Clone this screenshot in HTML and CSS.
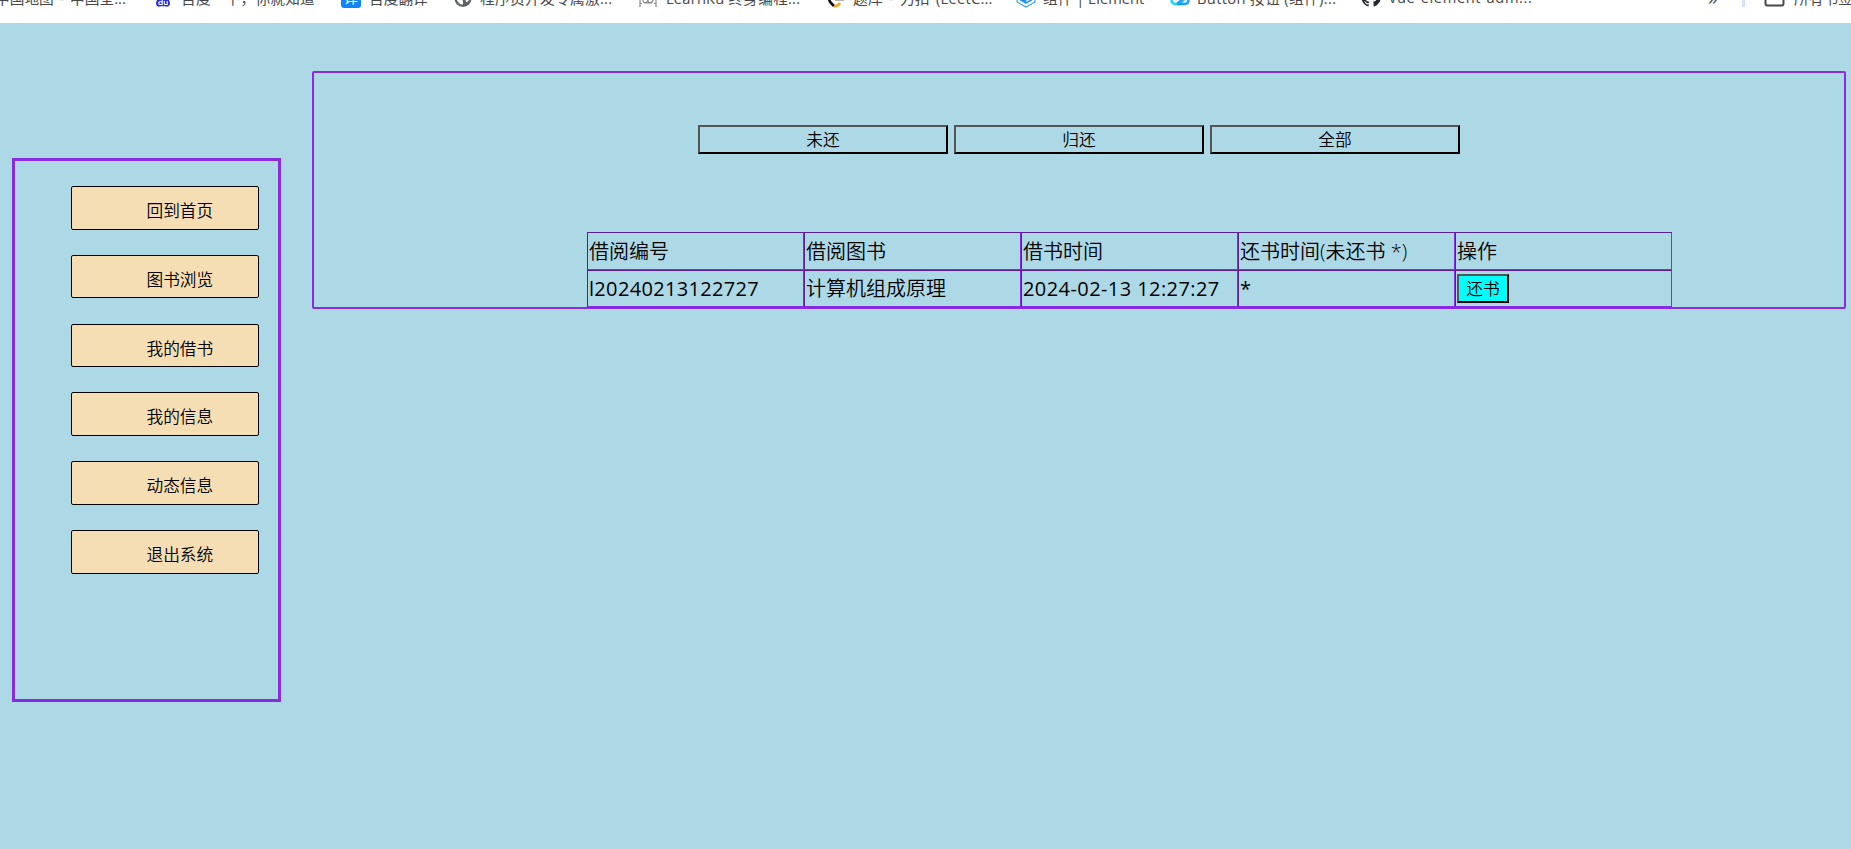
FILE: index.html
```html
<!DOCTYPE html>
<html lang="zh-CN">
<head>
<meta charset="utf-8">
<title>我的借书</title>
<link rel="stylesheet" href="styles.css">
</head>
<body>
<header class="bookmarks">
  <span class="bm bm-map">中国地图 - 中国全...</span>
  <span class="bm bm-baidu"><svg width="16" height="20" viewBox="0 0 16 20"><path d="M8 7C4 9 1 12 1 15.500C1 18 3 19 5 18.500C7 18 9 18 11 18.500C13 19 15 18 15 15.500C15 12 12 9 8 7Z" fill="#2932e1"/><path d="M7.200 12v4.500H5.500a1.400 1.400 0 1 1 0-2.700h1.700M9.300 13v2.500q0 1 1 1h1.900V13" fill="none" stroke="#fff" stroke-width="1.100"/></svg>百度一下，你就知道</span>
  <span class="bm bm-fanyi"><span class="yi">译</span>百度翻译</span>
  <span class="bm bm-dev"><svg width="18" height="20" viewBox="0 0 18 20"><circle cx="9" cy="10.500" r="8.500" fill="#5f6368"/><path d="M2.500 10h4l2.500 3v3.500c-4 0-6-3-6.500-6.500zM11 9h4.500c0 3-1 5-3.500 5z" fill="#fff"/></svg>程序员开发专属激...</span>
  <span class="bm bm-learn"><svg width="18" height="20" viewBox="0 0 18 20"><path d="M1 4v15M17 4v15M1 15.500h2M15 15.500h2M4 12q0 3 2.500 2.500T9 12q0 3 2.500 2.500T14 12M5 15h8" fill="none" stroke="#8a8a8a" stroke-width="1.200"/></svg>LearnKu 终身编程...</span>
  <span class="bm bm-leet"><svg width="18" height="20" viewBox="0 0 18 20"><path d="M2 10q0 3 2 5l3 3" fill="none" stroke="#111" stroke-width="2.600"/><path d="M7 18q3 1 6-3" fill="none" stroke="#ffa116" stroke-width="2.600"/><path d="M8 12h9" stroke="#b3b3b3" stroke-width="2"/></svg>题库 - 力扣 (LeetC...</span>
  <span class="bm bm-el"><svg width="20" height="20" viewBox="0 0 20 20"><path d="M1 5v9l9 5 9-5V5" fill="none" stroke="#409eff" stroke-width="1.200"/><path d="M4 6v6.500l6 3.500 6-3.500V6z" fill="#1890ff"/><path d="M10 13.500l5-3" stroke="#fff" stroke-width="1.200"/></svg>组件 | Element</span>
  <span class="bm bm-vant"><svg width="20" height="20" viewBox="0 0 20 20"><path d="M1.500 12q0 4 4 4h4l7-7" fill="none" stroke="#16d9ef" stroke-width="2.400"/><path d="M7 16h7.500q4 0 4-4V8M7 16l8-7" fill="none" stroke="#1e9bff" stroke-width="2.400"/></svg>Button 按钮 (组件)...</span>
  <span class="bm bm-git"><svg width="20" height="20" viewBox="0 0 20 20"><path d="M10 0a9.500 9.500 0 0 0-3 18.500c.5.100.7-.2.700-.5v-1.700c-2.700.6-3.200-1.100-3.200-1.100-.4-1.100-1.100-1.400-1.100-1.400-.9-.6.100-.6.100-.6 1 .1 1.500 1 1.500 1 .8 1.500 2.200 1.100 2.800.8.100-.6.300-1 .6-1.300-3-.3-4-2-4-4.500h11.600c0 2.500-1.200 4.200-4 4.500.4.400.6 1 .6 1.800V18c0 .3.200.6.700.5A9.500 9.500 0 0 0 10 0z" fill="#24292f"/></svg>vue-element-adm...</span>
  <span class="bm bm-more">»</span>
  <span class="bm-divider"></span>
  <span class="bm bm-all"><svg width="21" height="18" viewBox="0 0 21 18"><path d="M1.500 4v10.500q0 2 2 2h14q2 0 2-2V4" fill="none" stroke="#474747" stroke-width="2"/></svg>所有书签</span>
</header>
<main class="page">
  <nav class="side">
    <a class="side-item">回到首页</a>
    <a class="side-item">图书浏览</a>
    <a class="side-item">我的借书</a>
    <a class="side-item">我的信息</a>
    <a class="side-item">动态信息</a>
    <a class="side-item">退出系统</a>
  </nav>
  <section class="panel">
    <div class="filters">
      <button class="filter">未还</button>
      <button class="filter">归还</button>
      <button class="filter">全部</button>
    </div>
    <div class="records">
      <div class="cell head">借阅编号</div>
      <div class="cell head">借阅图书</div>
      <div class="cell head">借书时间</div>
      <div class="cell head">还书时间(未还书 *)</div>
      <div class="cell head">操作</div>
      <div class="cell"><span class="record-id">l20240213122727</span></div>
      <div class="cell">计算机组成原理</div>
      <div class="cell"><span class="record-time">2024-02-13 12:27:27</span></div>
      <div class="cell"><span class="record-id">*</span></div>
      <div class="cell"><button class="return">还书</button></div>
    </div>
  </section>
</main>
</body>
</html>
```
FILE: styles.css
```css
* { box-sizing: border-box; }
body {
  margin: 0;
  height: 849px;
  overflow: hidden;
  background: #add8e6;
  color: #000;
  font-family: "Open Sans", "Noto Sans CJK SC", sans-serif;
}
.bookmarks {
  position: relative;
  height: 23px;
  overflow: hidden;
  background: #fff;
  color: #474747;
  font-size: 14.7px;
}
/* each bookmark sits at its own place on the half-scrolled bar */
.bm {
  position: absolute;
  top: -13px;
  display: flex;
  align-items: center;
  height: 20px;
  white-space: nowrap;
}
.bm svg, .yi { flex: none; margin-top: 2px; }
.bm-map { left: -5px; word-spacing: 2px; }
.bm-baidu { left: 155px; gap: 10px; letter-spacing: 0.2px; }
.bm-fanyi { left: 341px; gap: 8px; }
.bm-dev { left: 454px; gap: 8px; letter-spacing: 0.3px; }
.bm-learn { left: 639px; gap: 9px; letter-spacing: 0.2px; }
.bm-leet { left: 827px; gap: 8px; word-spacing: 2px; letter-spacing: 0.25px; }
.bm-el { left: 1016px; gap: 7px; }
.bm-vant { left: 1170px; gap: 7px; letter-spacing: 0.35px; }
.bm-git { left: 1361px; gap: 8px; letter-spacing: 0.6px; }
.bm-more { left: 1708px; font-size: 20px; }
.bm-all { left: 1764px; gap: 9px; }
.yi {
  width: 20px;
  height: 20px;
  border-radius: 3px;
  background: #1283ff;
  color: #fff;
  font-size: 14px;
  line-height: 20px;
  text-align: center;
}
.bm-divider {
  position: absolute;
  left: 1742px;
  top: 0;
  width: 3px;
  height: 7px;
  background: #d3e3fd;
}
.page {
  display: flex;
  align-items: flex-start;
  gap: 31px;
  padding: 48px 5px 0 12px;
}
.side {
  display: flex;
  flex-direction: column;
  gap: 25.2px;
  width: 269px;
  height: 544px;
  margin-top: 87px;
  padding: 25px 19px 0 56px;
  border: 3px solid #8a2be2;
}
.side-item {
  height: 43.6px;
  padding: 5px 0 0 74.500px;
  border: 1px solid #000;
  border-radius: 2px;
  background: #f5deb3;
  font-size: 16.7px;
  font-weight: 350;
  line-height: 38px;
}
.panel {
  width: 1534px;
  height: 238px;
  border: 2px solid #8a2be2;
  border-radius: 2px;
}
.filters {
  display: flex;
  gap: 6px;
  margin: 52px 0 0 384px;
}
.filter, .return {
  border: 2px solid;
  border-color: #555 #000 #000 #555;
  color: #000;
  font-family: inherit;
  font-size: 16.7px;
  font-weight: 350;
  line-height: 24px;
}
.filter {
  width: 250px;
  height: 29px;
  padding: 0;
  background: transparent;
}
.return {
  width: 52px;
  height: 29px;
  padding: 0;
  background: #0ff;
}
.records {
  display: grid;
  grid-template-columns: repeat(5, 217px);
  grid-template-rows: 38px 37px;
  margin: 78px 0 0 273px;
}
.cell {
  display: flex;
  align-items: center;
  padding: 0 1px;
  border: 1px solid;
  border-color: #5b1c96 #8a2be2 #8a2be2 #5b1c96;
  font-size: 20px;
  font-weight: 350;
  line-height: 30px;
  white-space: nowrap;
}
.head { padding-top: 2px; }
.record-id { font-weight: 400; letter-spacing: 0.32px; }
.record-time { font-weight: 400; letter-spacing: 0.42px; }
```
